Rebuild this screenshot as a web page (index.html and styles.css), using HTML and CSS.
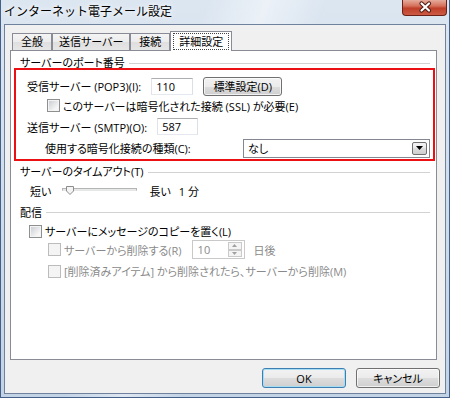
FILE: index.html
```html
<!DOCTYPE html>
<html lang="ja">
<head>
    <meta charset="UTF-8">
    <title>インターネット電子メール設定</title>
    <link rel="stylesheet" href="styles.css">
</head>
<body>
    <div class="window">
        <div class="titlebar">
            <span class="title">インターネット電子メール設定</span>
            <button class="close" type="button">
                <svg width="45" height="15" viewBox="0 0 45 15">
                    <path d="M18.5 3.5 L26 10.5 M26 3.5 L18.5 10.5" stroke="#4a1a12" stroke-width="4.2" stroke-linecap="round"/>
                    <path d="M18.5 3.5 L26 10.5 M26 3.5 L18.5 10.5" stroke="#fff" stroke-width="2.2" stroke-linecap="round"/>
                </svg>
            </button>
        </div>

        <div class="dialog">
            <div class="tabs">
                <div class="tab">全般</div>
                <div class="tab">送信サーバー</div>
                <div class="tab">接続</div>
                <div class="tab active"><span class="focus">詳細設定</span></div>
            </div>

            <div class="panel">
                <div class="group-title g1">サーバーのポート番号</div>

                <!-- 注目部分 -->
                <div class="highlight">
                    <div class="row r-pop">
                        <label>受信サーバー (POP3)(I):</label>
                        <input type="text" class="port" value="110">
                        <button type="button" class="btn std">標準設定(D)</button>
                    </div>
                    <div class="row r-ssl">
                        <span class="check"></span>
                        <span>このサーバーは暗号化された接続 (SSL) が必要(E)</span>
                    </div>
                    <div class="row r-smtp">
                        <label>送信サーバー (SMTP)(O):</label>
                        <input type="text" class="port smtp" value="587">
                    </div>
                    <div class="row r-enc">
                        <label>使用する暗号化接続の種類(C):</label>
                        <div class="select">
                            <span>なし</span>
                            <span class="arrow">
                                <svg width="7" height="4" viewBox="0 0 7 4"><path d="M0 0 H7 L3.5 4 Z" fill="#000"/></svg>
                            </span>
                        </div>
                    </div>
                </div>

                <div class="group-title g2">サーバーのタイムアウト(T)</div>
                <div class="row r-slider">
                    <span>短い</span>
                    <div class="slider">
                        <div class="track"></div>
                        <svg class="thumb" width="8" height="9" viewBox="0 0 8 9">
                            <path d="M0.5 0.5 H7.5 V5 L4 8.5 L0.5 5 Z" fill="#f4f4f4" stroke="#8c8c8c"/>
                        </svg>
                    </div>
                    <span class="far">長い</span>
                    <span class="val">1 分</span>
                </div>

                <div class="group-title g3">配信</div>
                <div class="row r-copy">
                    <span class="check"></span>
                    <span>サーバーにメッセージのコピーを置く(L)</span>
                </div>
                <div class="row r-del disabled">
                    <span class="check off"></span>
                    <span>サーバーから削除する(R)</span>
                    <div class="spin">
                        <span>10</span>
                        <div class="spin-btns">
                            <span><svg width="5" height="3" viewBox="0 0 5 3"><path d="M0 3 H5 L2.5 0 Z" fill="#a0a0a0"/></svg></span>
                            <span><svg width="5" height="3" viewBox="0 0 5 3"><path d="M0 0 H5 L2.5 3 Z" fill="#a0a0a0"/></svg></span>
                        </div>
                    </div>
                    <span class="days">日後</span>
                </div>
                <div class="row r-trash disabled">
                    <span class="check off"></span>
                    <span>[削除済みアイテム] から削除されたら、サーバーから削除(M)</span>
                </div>
            </div>

            <div class="footer">
                <button type="button" class="btn ok">OK</button>
                <button type="button" class="btn">キャンセル</button>
            </div>
        </div>
    </div>
</body>
</html>
```

FILE: styles.css
```css
* {
    box-sizing: border-box;
}
html, body {
    margin: 0;
}
body {
    font-family: "Open Sans", "Noto Sans CJK JP", sans-serif;
    font-size: 11px;
    font-feature-settings: "palt";
    color: #000;
}

/* ウィンドウ枠 */
.window {
    width: 450px;
    height: 398px;
    border: 1px solid #44608a;
    border-top: none;
    background:
        linear-gradient(110deg, rgba(255,255,255,0) 35%, rgba(255,255,255,0.45) 45%, rgba(255,255,255,0) 55%),
        linear-gradient(#dce6f1, #c3d3e6);
    display: flex;
    flex-direction: column;
}
.titlebar {
    height: 24px;
    display: flex;
    align-items: flex-start;
}
.title {
    font-family: "Noto Sans CJK JP", sans-serif;
    font-feature-settings: normal;
    font-size: 12px;
    line-height: 21px;
    padding-left: 3px;
    text-shadow: 0 0 4px #fff, 0 0 8px #fff;
}
.close {
    margin-left: auto;
    margin-right: 2px;
    width: 45px;
    height: 16px;
    padding: 0;
    display: block;
    border: 1px solid #6b2117;
    border-top: none;
    border-radius: 0 0 4px 4px;
    background: linear-gradient(#e6ab9c, #d4705b 40%, #bf3f28 55%, #cc5a45);
}
.close svg {
    display: block;
}

.dialog {
    flex: 1;
    margin: 0 3px 3px;
    border: 1px solid #6f819c;
    background-color: #f0f0f0;
    padding: 6px 5px 5px;
    display: flex;
    flex-direction: column;
}

/* タブ */
.tabs {
    display: flex;
    align-items: flex-end;
    height: 20px;
    margin: 0 0 -1px 2px;
    position: relative;
    z-index: 1;
}
.tab {
    height: 17px;
    margin-bottom: 1px;
    min-width: 40px;
    padding: 0 6px;
    text-align: center;
    line-height: 16px;
    border: 1px solid #898c95;
    border-bottom: none;
    background: linear-gradient(#f4f4f4, #ececec 50%, #dfdfdf 50%, #e6e6e6);
}
.tab.active {
    height: 20px;
    margin-bottom: 0;
    padding: 1px 2px 0;
    background: #fff;
}
.focus {
    display: block;
    padding: 0 5px;
    line-height: 15px;
    border: 1px dotted #444;
}

.panel {
    height: 310px;
    margin-right: 3px;
    border: 1px solid #898c95;
    background-color: #fff;
    padding: 5px 6px 0 9px;
}

.group-title {
    display: flex;
    align-items: center;
}
.group-title::after {
    content: "";
    flex: 1;
    height: 1px;
    margin: 2px 0 0 4px;
    background-color: #d2d2d2;
}
.g1 { height: 12px; }
.g2 { height: 20px; }
.g3 { height: 21px; }

.highlight {
    border: 2px solid #ea1014;
    margin: 0 -5px 0 -6px;
    padding: 6px 0 1px;
}

.row {
    display: flex;
    align-items: center;
    white-space: nowrap;
}
.r-pop { height: 20px; padding-left: 11px; }
.r-ssl { height: 19px; padding-left: 31px; }
.r-smtp { height: 23px; padding-left: 11px; }
.r-enc { height: 20px; padding-left: 29px; }
.r-slider { height: 20px; padding-left: 10px; }
.r-copy { height: 18px; padding-left: 9px; }
.r-del { height: 19px; padding-left: 28px; }
.r-trash { height: 24px; padding-left: 28px; }

.disabled {
    color: #8a8a8a;
}

/* 入力欄 */
.port {
    width: 42px;
    height: 17px;
    margin-left: 10px;
    padding: 0 4px;
    font: inherit;
    color: #000;
    border: 1px solid;
    border-color: #abadb3 #dbdfe6 #e3e9ef #e2e3ea;
    outline: none;
}
.port.smtp {
    width: 41px;
}

.btn {
    height: 20px;
    padding: 0;
    font: inherit;
    color: #000;
    border: 1px solid #707070;
    border-radius: 3px;
    background: linear-gradient(#f2f2f2, #ebebeb 50%, #dddddd 50%, #cfcfcf);
    box-shadow: inset 0 0 0 1px rgba(255,255,255,0.7);
}
.btn.std {
    width: 79px;
    height: 19px;
    margin-left: 10px;
}

.check {
    width: 13px;
    height: 13px;
    margin-right: 3px;
    flex: none;
    border: 1px solid #8e8f8f;
    background: linear-gradient(135deg, #c6cad0, #f6f6f6 75%);
    box-shadow: inset 0 0 0 1px #f4f4f4;
}
.check.off {
    border-color: #bcbcbc;
    background: #f4f4f4;
    box-shadow: none;
}

.select {
    margin-left: auto;
    margin-right: 3px;
    width: 187px;
    height: 19px;
    padding-left: 4px;
    display: flex;
    align-items: center;
    border: 1px solid #828790;
    background-color: #fff;
}
.arrow {
    margin-left: auto;
    margin-right: 2px;
    width: 15px;
    height: 13px;
    display: flex;
    align-items: center;
    justify-content: center;
    border: 1px solid #707070;
    border-radius: 2px;
    background: linear-gradient(#f2f2f2, #ebebeb 50%, #dddddd 50%, #cfcfcf);
}
.arrow svg {
    display: block;
}

/* スライダー */
.slider {
    position: relative;
    width: 75px;
    height: 20px;
    margin-left: 11px;
}
.track {
    position: absolute;
    left: 0;
    right: 0;
    top: 7px;
    height: 3px;
    border: 1px solid #b4b4b4;
    border-bottom-color: #e6e6e6;
    background-color: #e7eaea;
}
.thumb {
    position: absolute;
    left: 4px;
    top: 5px;
}
.far { margin-left: 12px; }
.val { margin-left: 8px; }

/* 日数 */
.spin {
    width: 53px;
    height: 19px;
    margin-left: 10px;
    padding-left: 5px;
    display: flex;
    align-items: center;
    border: 1px solid #c9c9c9;
    background-color: #fff;
}
.spin-btns {
    margin-left: auto;
    margin-right: 2px;
    width: 14px;
    height: 15px;
    display: flex;
    flex-direction: column;
}
.spin-btns span {
    flex: 1;
    display: flex;
    align-items: center;
    justify-content: center;
    border: 1px solid #cacaca;
    background-color: #f4f4f4;
}
.spin-btns svg {
    display: block;
}
.days { margin-left: 9px; }

.footer {
    display: flex;
    justify-content: flex-end;
    gap: 10px;
    margin-top: 8px;
}
.footer .btn {
    width: 84px;
}
.btn.ok {
    border-color: #3c7fb1;
    box-shadow: inset 0 0 0 1px #a8dcf5;
}
```
